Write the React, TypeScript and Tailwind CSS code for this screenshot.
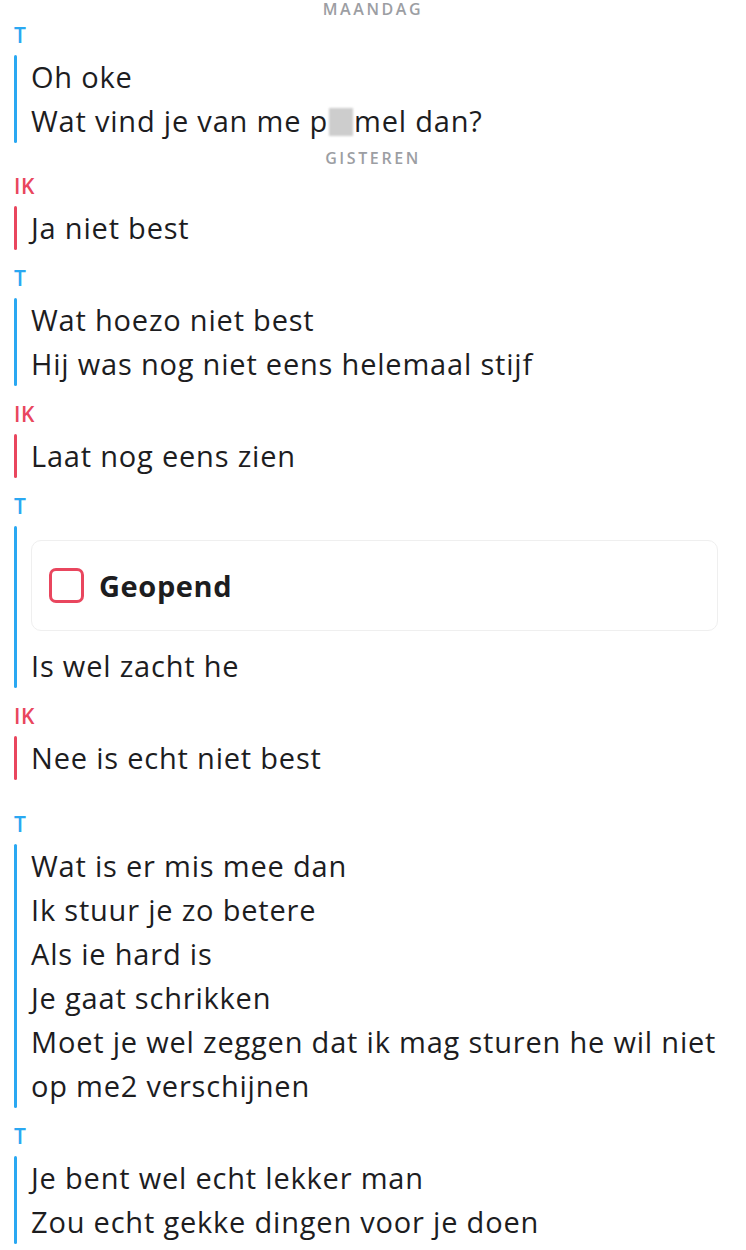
const BLUE = "bg-[#2aa8f2]";
const RED = "bg-[#e9465e]";

type Line = React.ReactNode;

function DateLabel({ text, className = "" }: { text: string; className?: string }) {
  return (
    <div
      className={`h-[18px] text-center text-[16px] leading-[18px] font-semibold tracking-[2.6px] text-[#9c9ea3] ${className}`}
    >
      {text}
    </div>
  );
}

function Group({
  who,
  lines,
  className = "mt-4",
  children,
}: {
  who: "T" | "IK";
  lines?: Line[];
  className?: string;
  children?: React.ReactNode;
}) {
  const me = who === "IK";
  return (
    <div className={className}>
      <div
        className={`h-6 pl-[14px] text-[21px] leading-6 font-semibold tracking-[0.5px] ${
          me ? "text-[#e9465e]" : "text-[#2aa8f2]"
        }`}
      >
        {who}
      </div>
      <div className="mt-2 flex pl-[14px]">
        <div className={`w-[3px] shrink-0 rounded-full ${me ? RED : BLUE}`} />
        <div className="min-w-0 flex-1 pl-[14px] pr-[28px]">
          {children}
          {lines?.map((l, i) => (
            <div
              key={i}
              className="text-[29px] leading-[44px] tracking-[0.8px] whitespace-nowrap text-[#1d1d1f]"
            >
              {l}
            </div>
          ))}
        </div>
      </div>
    </div>
  );
}

export default function App() {
  return (
    <div
      className="min-h-screen w-[746px] overflow-hidden bg-white"
      style={{ fontFamily: "'Open Sans', 'Noto Sans', sans-serif" }}
    >
      <DateLabel text="MAANDAG" />

      <Group
        who="T"
        className="mt-[5px]"
        lines={[
          "Oh oke",
          <>
            Wat vind je van me p
            <span className="mx-px inline-block h-[28px] w-[24px] translate-y-[4px] bg-[#cdcdcd] blur-[1px]" />
            mel dan?
          </>,
        ]}
      />

      <DateLabel text="GISTEREN" className="mt-[6px]" />

      <Group who="IK" className="mt-[7px]" lines={["Ja niet best"]} />

      <Group who="T" lines={["Wat hoezo niet best", "Hij was nog niet eens helemaal stijf"]} />

      <Group who="IK" lines={["Laat nog eens zien"]} />

      <Group who="T" lines={["Is wel zacht he"]}>
        <div className="mt-[14px] mb-[13px] flex h-[91px] items-center gap-[15px] rounded-[10px] border border-[#efefef] pl-[17px]">
          <div className="h-[35px] w-[35px] rounded-[7px] border-[3px] border-[#e9465e]" />
          <span className="text-[29px] font-bold tracking-[0.6px] text-[#1d1d1f]">Geopend</span>
        </div>
      </Group>

      <Group who="IK" lines={["Nee is echt niet best"]} />

      <Group
        who="T"
        className="mt-8"
        lines={[
          "Wat is er mis mee dan",
          "Ik stuur je zo betere",
          "Als ie hard is",
          "Je gaat schrikken",
          "Moet je wel zeggen dat ik mag sturen he wil niet",
          "op me2 verschijnen",
        ]}
      />

      <Group who="T" lines={["Je bent wel echt lekker man", "Zou echt gekke dingen voor je doen"]} />
    </div>
  );
}
